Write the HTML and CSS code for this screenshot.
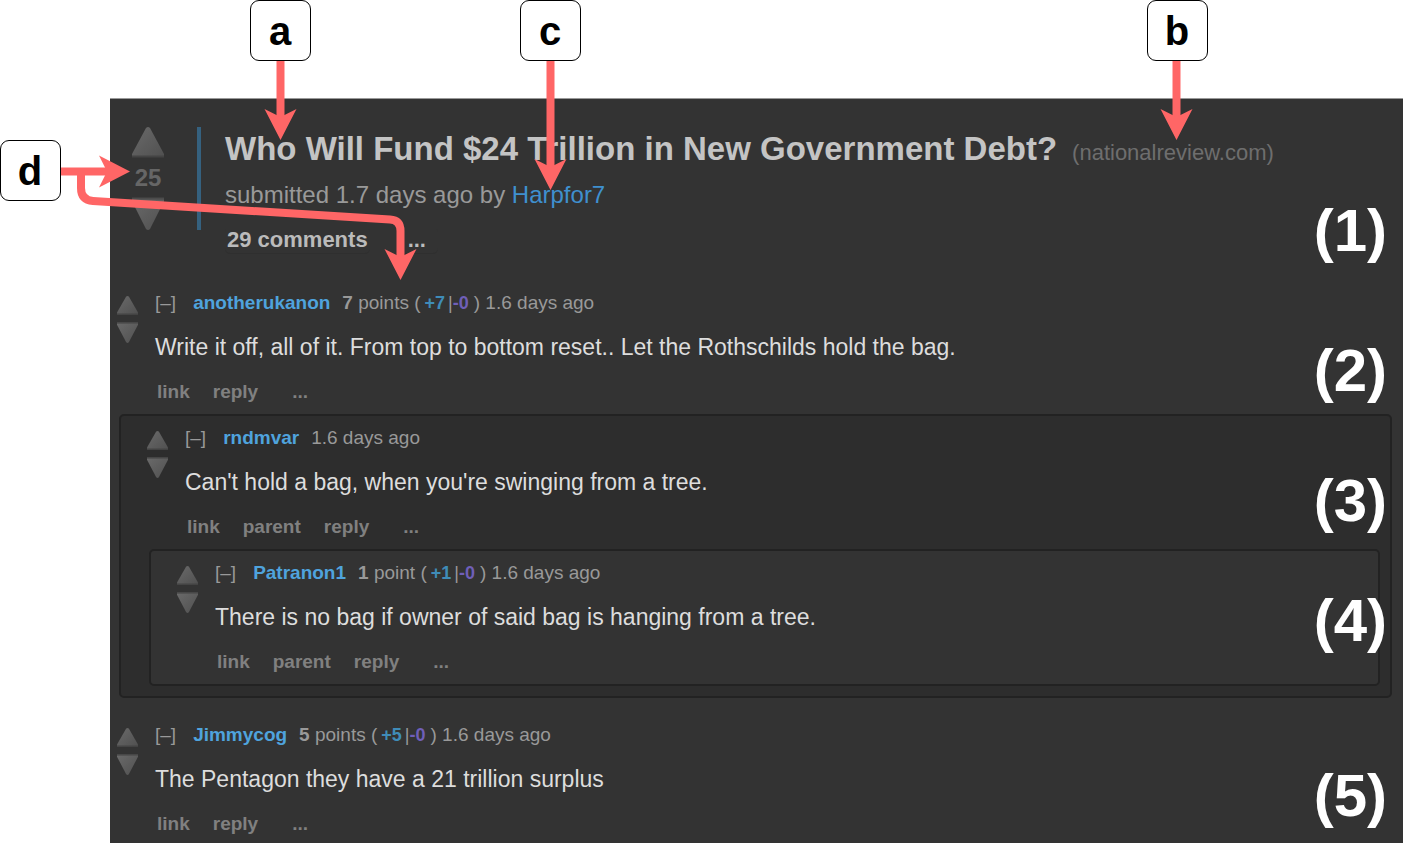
FILE: index.html
```html
<!DOCTYPE html>
<html lang="en">
<head>
    <meta charset="UTF-8">
    <meta name="viewport" content="width=device-width, initial-scale=1.0">
    <title>Who Will Fund $24 Trillion in New Government Debt?</title>
    <link rel="stylesheet" href="styles.css">
</head>
<body>
    <svg class="defs" width="0" height="0" aria-hidden="true">
        <defs>
            <linearGradient id="shade" x1="0" y1="0" x2="1" y2="1">
                <stop offset="0" stop-color="#6a6a6a"/>
                <stop offset="1" stop-color="#505050"/>
            </linearGradient>
            <symbol id="up" viewBox="0 0 32 31" preserveAspectRatio="none">
                <path d="M14 1Q16-1 18 1L32 27V30H0V27Z" fill="url(#shade)"/>
                <path d="M0 29.500H32" stroke="#444" stroke-width="2"/>
            </symbol>
            <symbol id="down" viewBox="0 0 32 31" preserveAspectRatio="none">
                <path d="M0 1H32V4L18 30Q16 32 14 30L0 4Z" fill="url(#shade)"/>
                <path d="M0 1.500H32" stroke="#4c4c4c" stroke-width="2"/>
            </symbol>
        </defs>
    </svg>

    <main class="panel">
        <article class="post">
            <div class="votes">
                <button class="vote" aria-label="upvote"><svg width="32" height="31"><use href="#up"/></svg></button>
                <span class="score">25</span>
                <button class="vote" aria-label="downvote"><svg width="32" height="33"><use href="#down"/></svg></button>
            </div>
            <div class="bar"></div>
            <div class="entry">
                <div class="heading">
                    <h1><a href="#">Who Will Fund $24 Trillion in New Government Debt?</a></h1>
                    <a class="domain" href="#">(nationalreview.com)</a>
                </div>
                <p class="tagline">submitted 1.7 days ago by <a href="#">Harpfor7</a></p>
                <div class="post-links">
                    <a href="#">29 comments</a>
                    <a class="more" href="#">...</a>
                </div>
            </div>
        </article>

        <section class="comments">
            <div class="comment">
                <div class="arrows">
                    <button class="vote" aria-label="upvote"><svg width="21" height="19"><use href="#up"/></svg></button>
                    <button class="vote" aria-label="downvote"><svg width="21" height="21"><use href="#down"/></svg></button>
                </div>
                <div class="text">
                    <p class="meta"><a class="fold" href="#">[–]</a><a class="author" href="#">anotherukanon</a><b>7</b> points (<span class="count"><b class="ups">+7</b>|<b class="downs">-0</b></span>) 1.6 days ago</p>
                    <p class="body">Write it off, all of it. From top to bottom reset.. Let the Rothschilds hold the bag.</p>
                    <div class="links"><a href="#">link</a><a href="#">reply</a><a class="more" href="#">...</a></div>
                </div>
            </div>

            <div class="child">
                <div class="comment">
                    <div class="arrows">
                        <button class="vote" aria-label="upvote"><svg width="21" height="19"><use href="#up"/></svg></button>
                        <button class="vote" aria-label="downvote"><svg width="21" height="21"><use href="#down"/></svg></button>
                    </div>
                    <div class="text">
                        <p class="meta"><a class="fold" href="#">[–]</a><a class="author" href="#">rndmvar</a>1.6 days ago</p>
                        <p class="body">Can't hold a bag, when you're swinging from a tree.</p>
                        <div class="links"><a href="#">link</a><a href="#">parent</a><a href="#">reply</a><a class="more" href="#">...</a></div>
                    </div>
                </div>

                <div class="child odd">
                    <div class="comment">
                        <div class="arrows">
                            <button class="vote" aria-label="upvote"><svg width="21" height="19"><use href="#up"/></svg></button>
                            <button class="vote" aria-label="downvote"><svg width="21" height="21"><use href="#down"/></svg></button>
                        </div>
                        <div class="text">
                            <p class="meta"><a class="fold" href="#">[–]</a><a class="author" href="#">Patranon1</a><b>1</b> point (<span class="count"><b class="ups">+1</b>|<b class="downs">-0</b></span>) 1.6 days ago</p>
                            <p class="body">There is no bag if owner of said bag is hanging from a tree.</p>
                            <div class="links"><a href="#">link</a><a href="#">parent</a><a href="#">reply</a><a class="more" href="#">...</a></div>
                        </div>
                    </div>
                </div>
            </div>

            <div class="comment">
                <div class="arrows">
                    <button class="vote" aria-label="upvote"><svg width="21" height="19"><use href="#up"/></svg></button>
                    <button class="vote" aria-label="downvote"><svg width="21" height="21"><use href="#down"/></svg></button>
                </div>
                <div class="text">
                    <p class="meta"><a class="fold" href="#">[–]</a><a class="author" href="#">Jimmycog</a><b>5</b> points (<span class="count"><b class="ups">+5</b>|<b class="downs">-0</b></span>) 1.6 days ago</p>
                    <p class="body">The Pentagon they have a 21 trillion surplus</p>
                    <div class="links"><a href="#">link</a><a href="#">reply</a><a class="more" href="#">...</a></div>
                </div>
            </div>
        </section>
    </main>

    <!-- callouts over the thread -->
    <svg class="pointers" width="1220" height="290" aria-hidden="true">
        <defs>
            <path id="head" d="M0 0L-16 -31L0 -23L16 -31Z"/>
        </defs>
        <g fill="none" stroke="#ff6666" stroke-width="8">
            <path d="M280.500 61V118"/>
            <path d="M550.500 61V168"/>
            <path d="M1176.500 61V118"/>
            <path d="M61 171.500H108"/>
            <path d="M81 172V188Q81 200 93 201L390 219.500Q400.500 220 400.500 231V258"/>
        </g>
        <g fill="#ff6666">
            <use href="#head" x="280.500" y="140"/>
            <use href="#head" x="550.500" y="190"/>
            <use href="#head" x="1176.500" y="140"/>
            <use href="#head" x="400.500" y="280"/>
            <use href="#head" transform="translate(130 171.500) rotate(-90)"/>
        </g>
    </svg>
    <span class="key key-a">a</span>
    <span class="key key-c">c</span>
    <span class="key key-b">b</span>
    <span class="key key-d">d</span>

    <span class="number number-1">(1)</span>
    <span class="number number-2">(2)</span>
    <span class="number number-3">(3)</span>
    <span class="number number-4">(4)</span>
    <span class="number number-5">(5)</span>
</body>
</html>
```
FILE: styles.css
```css
* {
    box-sizing: border-box;
    margin: 0;
    padding: 0;
}

body {
    position: relative;
    padding: 98px 1px 2px 110px;
    background-color: white;
    font-family: "Liberation Sans", Arial, sans-serif;
}

a {
    color: inherit;
    text-decoration: none;
}

.defs {
    position: absolute;
}

.panel {
    border-top: 1px solid #999;
    padding: 28px 0 7px;
    background-color: #333;
    color: #999;
}

.vote {
    display: block;
    border: none;
    background: none;
    cursor: pointer;
}

.vote svg {
    display: block;
}

/* post */

.post {
    display: flex;
    padding-left: 22px;
}

.score {
    display: block;
    color: #666;
    font-size: 24px;
    font-weight: bold;
    line-height: 39px;
    text-align: center;
}

.bar {
    width: 4px;
    height: 103px;
    margin: 0 24px 0 33px;
    background-color: #35617f;
}

.heading {
    display: flex;
    align-items: baseline;
    gap: 15px;
}

h1 {
    color: #c4c4c4;
    font-size: 33px;
    line-height: 44px;
}

.domain {
    color: #6e6e6e;
    font-size: 22px;
}

.tagline {
    margin-top: 9px;
    font-size: 24px;
    line-height: 30px;
}

.tagline a {
    color: #3f90cf;
}

.post-links {
    display: flex;
    gap: 26px;
    margin-top: 17px;
    color: #bbb;
    font-size: 22px;
    font-weight: bold;
    line-height: 26px;
}

.post-links a {
    padding: 0 2px;
    border-radius: 5px;
    box-shadow: 0 1px 0 #2f2f2f;
}

.post-links .more {
    padding: 0 12px;
}

/* comments */

.comments {
    padding: 37px 11px 0 7px;
}

.comment {
    display: flex;
    gap: 17px;
}

.arrows {
    display: flex;
    flex-direction: column;
    gap: 7px;
    padding-top: 6px;
}

.text {
    padding-top: 1px;
}

.meta {
    font-size: 19px;
    line-height: 24px;
}

.fold {
    margin-right: 17px;
}

.author {
    margin-right: 12px;
    color: #4fa3dd;
    font-weight: bold;
}

.count {
    margin: 0 5px 0 4px;
    font-size: 18px;
}

.ups {
    margin-right: 3px;
    color: #3f8cb8;
}

.downs {
    color: #6f5fb8;
}

.body {
    margin-top: 17px;
    color: #ddd;
    font-size: 23px;
    line-height: 30px;
}

.links {
    display: flex;
    gap: 23px;
    margin-top: 18px;
    padding-left: 2px;
    color: #808080;
    font-size: 19px;
    font-weight: bold;
    line-height: 24px;
}

.links .more {
    padding-left: 11px;
}

.child {
    margin: 10px 0 24px 2px;
    border: 2px solid #222;
    border-radius: 5px;
    padding: 9px 10px 10px 26px;
    background-color: #2d2d2d;
}

.child.odd {
    margin-bottom: 0;
    background-color: #333;
}

/* callouts */

.pointers {
    position: absolute;
    top: 0;
    left: 0;
    pointer-events: none;
}

.key {
    position: absolute;
    top: 0;
    width: 61px;
    height: 61px;
    border: 1px solid black;
    border-radius: 9px;
    padding-right: 1px;
    background-color: white;
    color: black;
    font-size: 40px;
    font-weight: bold;
    line-height: 61px;
    text-align: center;
}

.key-a {
    left: 250px;
}

.key-b {
    left: 1147px;
}

.key-c {
    left: 520px;
}

.key-d {
    top: 140px;
    left: 0;
}

.number {
    position: absolute;
    right: 17px;
    color: white;
    font-size: 60px;
    font-weight: bold;
    line-height: 70px;
}

.number-1 {
    top: 196px;
}

.number-2 {
    top: 336px;
}

.number-3 {
    top: 466px;
}

.number-4 {
    top: 586px;
}

.number-5 {
    top: 761px;
}
```
